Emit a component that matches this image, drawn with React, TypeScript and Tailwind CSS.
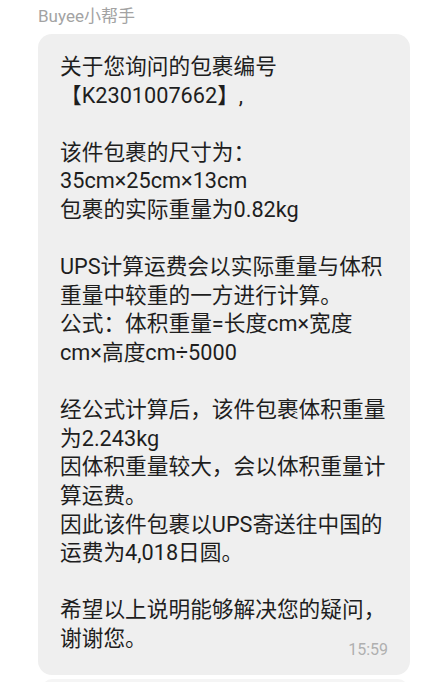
const lines = [
  "关于您询问的包裹编号",
  "【K2301007662】,",
  "",
  "该件包裹的尺寸为：",
  "35cm×25cm×13cm",
  "包裹的实际重量为0.82kg",
  "",
  "UPS计算运费会以实际重量与体积",
  "重量中较重的一方进行计算。",
  "公式：体积重量=长度cm×宽度",
  "cm×高度cm÷5000",
  "",
  "经公式计算后，该件包裹体积重量",
  "为2.243kg",
  "因体积重量较大，会以体积重量计",
  "算运费。",
  "因此该件包裹以UPS寄送往中国的",
  "运费为4,018日圆。",
  "",
  "希望以上说明能够解决您的疑问，",
]

export default function App() {
  return (
    <div
      className="w-[441px] h-[682px] overflow-hidden bg-white"
      style={{ fontFamily: 'Roboto, "Noto Sans CJK SC", sans-serif' }}
    >
      <div className="pl-[38px] pt-[4px] text-[17px] leading-[24px] text-[#a3a3a3]">Buyee小帮手</div>

      <div className="ml-[38px] mt-[6px] w-[372px] rounded-[14px] bg-[#efefef] px-[22px] pt-[19px] pb-[22px] text-[21.7px] leading-[28.6px] text-[#1e1e1e]">
        {lines.map((line, i) => (
          <div key={i} className="whitespace-nowrap h-[28.6px]">
            {line}
          </div>
        ))}
        <div className="flex items-end justify-between">
          <span>谢谢您。</span>
          <span className="translate-y-[7px] text-[16px] leading-[20px] text-[#b0b0b0]">15:59</span>
        </div>
      </div>

      <div className="ml-[42px] mt-[4px] h-[20px] w-[366px] rounded-[14px] bg-[#f5f5f5]"></div>
    </div>
  )
}
